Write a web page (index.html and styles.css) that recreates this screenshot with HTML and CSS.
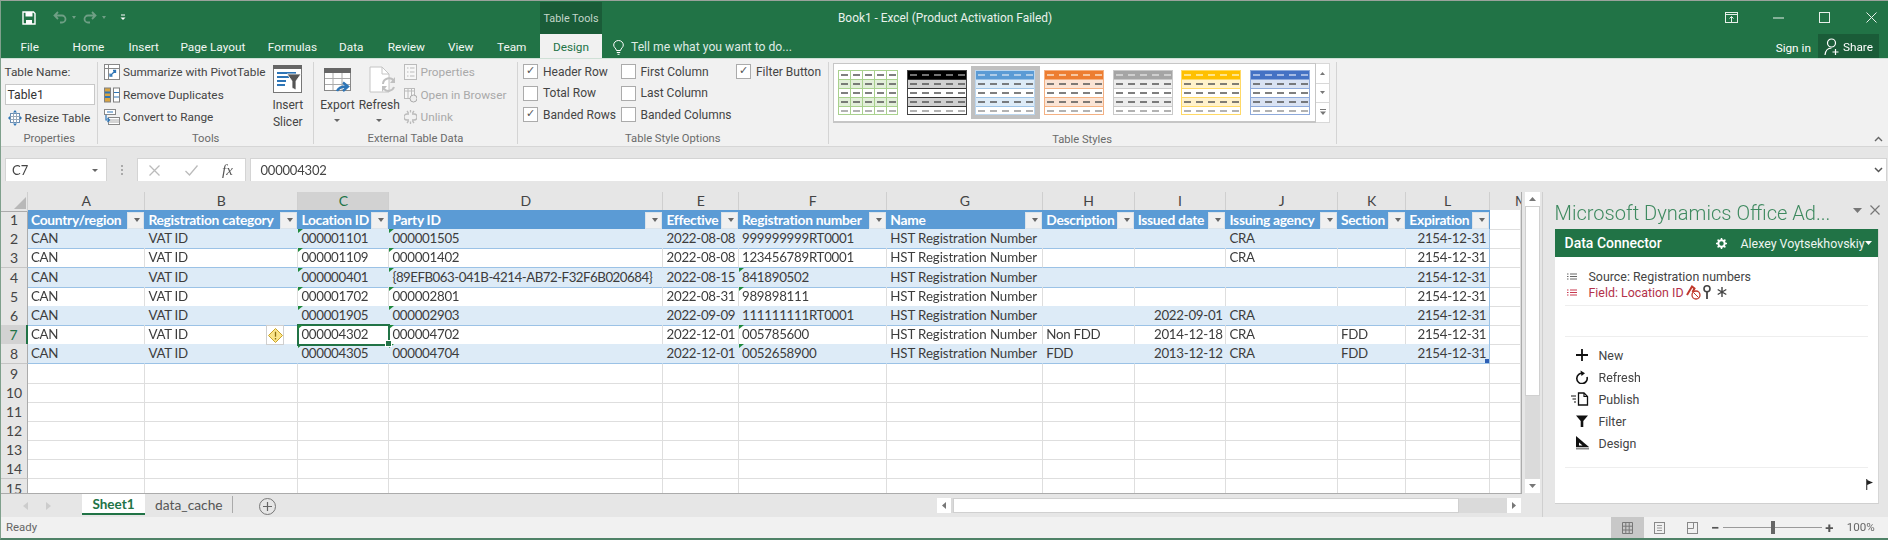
FILE: index.html
```html
<!DOCTYPE html>
<html lang="en">
<head>
<meta charset="utf-8">
<title>Book1 - Excel (Product Activation Failed)</title>
<link rel="stylesheet" href="styles.css">
</head>
<body>
<svg class="defs" width="0" height="0" aria-hidden="true">
  <symbol id="tbl" viewBox="0 0 60 45">
    <rect x="0.5" y="0.5" width="59" height="44" fill="#fff" class="tb-e"/>
    <rect x="1" y="1" width="58" height="8.5" class="tb-h"/>
    <rect x="1" y="9.5" width="58" height="9" class="tb-b"/>
    <rect x="1" y="27.5" width="58" height="9" class="tb-b"/>
    <path d="M1 9.5H59M1 18.5H59M1 27.5H59M1 36.5H59" class="tb-l" fill="none"/>
    <path d="M3 5H10M15 5H22M27 5H34M39 5H46M51 5H58" class="tb-hd" fill="none" stroke-width="1.4"/>
    <path d="M3 14H10M15 14H22M27 14H34M39 14H46M51 14H58M3 23H10M15 23H22M27 23H34M39 23H46M51 23H58M3 32H10M15 32H22M27 32H34M39 32H46M51 32H58" stroke="#555" fill="none" stroke-width="1.4"/>
    <path d="M3 41H10M15 41H22M27 41H34M39 41H46M51 41H58" stroke="#999" fill="none" stroke-width="1.4"/>
    <path d="M12.5 1V44M24.5 1V44M36.5 1V44M48.5 1V44" class="tb-v" fill="none"/>
    <rect x="0.5" y="0.5" width="59" height="44" fill="none" class="tb-e"/>
  </symbol>
</svg>
<div class="app">
  <header class="titlebar">
    <div class="qat">
      <svg class="q-save" width="14" height="14" viewBox="0 0 14 14"><path d="M1 1H11.5L13 2.5V13H1Z" fill="none" stroke="#fff" stroke-width="1.4"/><rect x="3.5" y="1" width="7" height="4.5" fill="#fff"/><rect x="4" y="9" width="6" height="4" fill="#fff"/></svg>
      <svg class="q-undo" width="14" height="13" viewBox="0 0 14 13"><path d="M5 1 1.5 4.5 5 8M2 4.5H9A3.5 3.5 0 0 1 9 11.5H7" fill="none" stroke="#6f9f85" stroke-width="1.8"/></svg>
      <span class="q-caret"></span>
      <svg class="q-redo" width="14" height="13" viewBox="0 0 14 13"><path d="M9 1 12.5 4.5 9 8M12 4.5H5A3.5 3.5 0 0 0 5 11.5H7" fill="none" stroke="#6f9f85" stroke-width="1.8"/></svg>
      <span class="q-caret"></span>
      <svg class="q-more" width="6" height="7" viewBox="0 0 6 7"><path d="M1 1H5" stroke="#fff"/><path d="M0.5 3.5H5.5L3 6Z" fill="#fff"/></svg>
    </div>
    <div class="tools-tab">Table Tools</div>
    <div class="doc-title">Book1 - Excel (Product Activation Failed)</div>
    <div class="winctl">
      <svg class="w-disp" width="13" height="11" viewBox="0 0 13 11"><rect x="0.5" y="0.5" width="12" height="10" fill="none" stroke="#e8f0ea"/><path d="M1 2.5H12M6.5 10V4.5M4.5 6.5 6.5 4.5 8.5 6.5" fill="none" stroke="#e8f0ea"/></svg>
      <svg class="w-min" width="11" height="2" viewBox="0 0 11 2"><path d="M0 1H11" stroke="#e8f0ea"/></svg>
      <svg class="w-max" width="11" height="11" viewBox="0 0 11 11"><rect x="0.5" y="0.5" width="10" height="10" fill="none" stroke="#e8f0ea"/></svg>
      <svg class="w-close" width="11" height="11" viewBox="0 0 11 11"><path d="M0.5 0.5 10.5 10.5M10.5 0.5 0.5 10.5" stroke="#e8f0ea"/></svg>
    </div>
  </header>

  <nav class="tabs">
    <span class="tab">File</span>
    <span class="tab">Home</span>
    <span class="tab">Insert</span>
    <span class="tab">Page Layout</span>
    <span class="tab">Formulas</span>
    <span class="tab">Data</span>
    <span class="tab">Review</span>
    <span class="tab">View</span>
    <span class="tab">Team</span>
    <span class="tab tab-on">Design</span>
    <span class="tell">
      <svg width="11" height="15" viewBox="0 0 11 15"><path d="M3.5 10.5C3 8 .7 7.500 .7 5A4.800 4.500 0 0 1 10.300 5C10.300 7.500 8 8 7.500 10.500ZM3.800 12.500H7.200M4.500 14.300H6.500" fill="none" stroke="#fff"/></svg>
      Tell me what you want to do...
    </span>
    <span class="signin">Sign in</span>
    <span class="share">
      <svg width="16" height="18" viewBox="0 0 16 18"><circle cx="7.500" cy="5" r="4" fill="none" stroke="#fff" stroke-width="1.200"/><path d="M1 17C1.500 12.500 4 10 7.500 10M11.500 11V17M8.500 14H14.500" fill="none" stroke="#fff" stroke-width="1.200"/></svg>
      Share
    </span>
  </nav>

  <section class="ribbon">
    <div class="grp g-prop">
      <div class="grp-body prop-body">
        <div class="rrow">Table Name:</div>
        <div class="name-input">Table1</div>
        <div class="rrow">
          <svg class="ric" width="14" height="16" viewBox="0 0 14 16"><rect x="2.500" y="3.500" width="9" height="9" fill="#fff" stroke="#6a8fb5"/><path d="M2.500 6.500H11.500M2.500 9.500H11.500M5.500 3.500V12.500M8.500 3.500V12.500" stroke="#9ab"/><path d="M7 0 9 2.500H5ZM7 16 5 13.500H9ZM0 8 2 6V10ZM14 8 12 10V6Z" fill="#2e75b6"/></svg>
          Resize Table
        </div>
      </div>
      <div class="grp-label">Properties</div>
    </div>

    <div class="grp g-tools">
      <div class="grp-body tools-body">
        <div class="rlist">
          <div class="rrow"><svg class="ric" width="16" height="16" viewBox="0 0 16 16"><rect x="0.500" y="0.500" width="15" height="15" fill="#fff" stroke="#888"/><path d="M0.500 4.500H15.500M4.500 0.500V15.500" stroke="#888"/><path d="M7 11 11 7M9 6.500H11.500V9M6 9.500V12H8.500" fill="none" stroke="#2e75b6" stroke-width="1.300"/></svg>Summarize with PivotTable</div>
          <div class="rrow"><svg class="ric" width="16" height="16" viewBox="0 0 16 16"><rect x="0.500" y="1" width="6" height="14" fill="#d9a441" stroke="#7f7f7f"/><rect x="9.500" y="1" width="6" height="14" fill="#fff" stroke="#7f7f7f"/><path d="M1 5.500H6M1 10H6" stroke="#2e75b6" stroke-width="2"/><path d="M10 5.500H15M10 10H15" stroke="#2e75b6"/></svg>Remove Duplicates</div>
          <div class="rrow"><svg class="ric" width="16" height="16" viewBox="0 0 16 16"><rect x="0.500" y="0.500" width="11" height="5" fill="#fff" stroke="#888"/><path d="M3 3H9" stroke="#2e75b6"/><rect x="4.500" y="8.500" width="11" height="7" fill="#fff" stroke="#888"/><path d="M4.500 11H15.500M4.500 13H15.500" stroke="#aaa"/><path d="M2 6V11H5M3.500 9 5.500 11 3.500 13" fill="none" stroke="#2e75b6" stroke-width="1.200"/></svg>Convert to Range</div>
        </div>
        <div class="bigbtn slicer">
          <svg width="29" height="28" viewBox="0 0 29 28"><rect x="0.500" y="0.500" width="28" height="27" fill="#fff" stroke="#777"/><rect x="0" y="0" width="29" height="4" fill="#666"/><path d="M4 8H23M4 12H16M4 16H13M4 20H12" stroke="#2e75b6" stroke-width="2"/><path d="M14 9H28L23 16V25L19 23V16Z" fill="#555" stroke="#fff" stroke-width=".8"/></svg>
          <span>Insert<br>Slicer</span>
        </div>
      </div>
      <div class="grp-label">Tools</div>
    </div>

    <div class="grp g-ext">
      <div class="grp-body ext-body">
        <div class="bigbtn export">
          <svg width="27" height="29" viewBox="0 0 27 29"><rect x="0.500" y="2.500" width="26" height="22" fill="#fff" stroke="#888"/><rect x="0" y="2" width="27" height="5" fill="#666"/><path d="M1 12.500H26M1 18.500H26M9 7V24M18 7V24" stroke="#aaa"/><path d="M13 25C15 21 18 20.500 22 20.500M19 16.500 24 20.500 19 25" fill="none" stroke="#2e75b6" stroke-width="2.400"/></svg>
          <span>Export</span><i class="drop"></i>
        </div>
        <div class="bigbtn refresh">
          <svg width="27" height="29" viewBox="0 0 27 29"><path d="M1 1H13L20 8V26H1Z" fill="#fff" stroke="#c4c4c4"/><path d="M13 1V8H20" fill="none" stroke="#c4c4c4"/><path d="M14 18A6 6 0 0 1 25 15M25 21A6 6 0 0 1 15 23" fill="none" stroke="#c0c0c0" stroke-width="2"/><path d="M26 11V17H21ZM13 26V20H18Z" fill="#c0c0c0"/></svg>
          <span>Refresh</span><i class="drop"></i>
        </div>
        <div class="rlist off">
          <div class="rrow"><svg class="ric" width="13" height="16" viewBox="0 0 13 16"><rect x="0.500" y="0.500" width="12" height="15" fill="#f7f7f7" stroke="#bbb"/><path d="M3 4H4.500M3 8H4.500M3 12H4.500M6 4H10.500M6 8H10.500M6 12H10.500" stroke="#bbb"/></svg>Properties</div>
          <div class="rrow"><svg class="ric" width="13" height="16" viewBox="0 0 13 16"><rect x="0.500" y="1.500" width="10" height="10" fill="#f7f7f7" stroke="#bbb"/><path d="M.5 4H10.500M4 2V11M7.500 2V11" stroke="#bbb"/><circle cx="9.500" cy="11.500" r="3.500" fill="#eee" stroke="#aaa"/></svg>Open in Browser</div>
          <div class="rrow"><svg class="ric" width="13" height="16" viewBox="0 0 13 16"><path d="M5 5H3A3 3 0 0 0 3 11H5M8 5H10A3 3 0 0 1 10 11H8M6.500 1V3.500M3 2 4.500 4M10 2 8.500 4M6.500 12.500V15M3 14 4.500 12M10 14 8.500 12" fill="none" stroke="#bbb" stroke-width="1.300"/></svg>Unlink</div>
        </div>
      </div>
      <div class="grp-label">External Table Data</div>
    </div>

    <div class="grp g-opt">
      <div class="grp-body opt-body">
        <label class="chk on">Header Row</label>
        <label class="chk">First Column</label>
        <label class="chk on">Filter Button</label>
        <label class="chk">Total Row</label>
        <label class="chk">Last Column</label>
        <span></span>
        <label class="chk on">Banded Rows</label>
        <label class="chk">Banded Columns</label>
        <span></span>
      </div>
      <div class="grp-label">Table Style Options</div>
    </div>

    <div class="grp g-sty">
      <div class="grp-body sty-body">
        <div class="gallery">
          <div class="swatch"><svg class="thumb t-green" width="60" height="45"><use href="#tbl"/></svg></div>
          <div class="swatch"><svg class="thumb t-black" width="60" height="45"><use href="#tbl"/></svg></div>
          <div class="swatch swatch-on"><svg class="thumb t-blue" width="60" height="45"><use href="#tbl"/></svg></div>
          <div class="swatch"><svg class="thumb t-orange" width="60" height="45"><use href="#tbl"/></svg></div>
          <div class="swatch"><svg class="thumb t-gray" width="60" height="45"><use href="#tbl"/></svg></div>
          <div class="swatch"><svg class="thumb t-gold" width="60" height="45"><use href="#tbl"/></svg></div>
          <div class="swatch"><svg class="thumb t-navy" width="60" height="45"><use href="#tbl"/></svg></div>
        </div>
        <div class="gal-scroll">
          <span><svg width="5" height="3" viewBox="0 0 5 3"><path d="M2.500 0 5 3H0Z" fill="#777"/></svg></span>
          <span><svg width="5" height="3" viewBox="0 0 5 3"><path d="M0 0H5L2.500 3Z" fill="#777"/></svg></span>
          <span><svg width="6" height="6" viewBox="0 0 6 6"><path d="M0 .5H6" stroke="#777"/><path d="M0 2.500H6L3 6Z" fill="#777"/></svg></span>
        </div>
      </div>
      <div class="grp-label">Table Styles</div>
    </div>
    <svg class="collapse" width="9" height="6" viewBox="0 0 9 6"><path d="M1 5 4.500 1.500 8 5" fill="none" stroke="#666" stroke-width="1.400"/></svg>
  </section>

  <section class="fbar">
    <div class="namebox">C7<i class="drop"></i></div>
    <div class="fdots"></div>
    <div class="fbtns">
      <svg width="11" height="11" viewBox="0 0 11 11"><path d="M.5 .5 10.500 10.500M10.500 .5 .5 10.500" stroke="#bbb" stroke-width="1.300"/></svg>
      <svg width="13" height="11" viewBox="0 0 13 11"><path d="M.5 6 4.500 10 12.500 .5" fill="none" stroke="#bbb" stroke-width="1.300"/></svg>
      <span class="fx">fx</span>
    </div>
    <div class="finput">000004302
      <svg width="9" height="6" viewBox="0 0 9 6"><path d="M1 1 4.500 4.500 8 1" fill="none" stroke="#555" stroke-width="1.500"/></svg>
    </div>
  </section>

  <main class="main">
    <div class="workarea">
      <div class="sheet-row">
        <div class="sheet">
          <div class="row colhead"><div class="corner"><i></i></div><div>A</div><div>B</div><div class="col-on">C</div><div>D</div><div>E</div><div>F</div><div>G</div><div>H</div><div>I</div><div>J</div><div>K</div><div>L</div><div class="col-m">M</div></div>
          <div class="row thead"><div class="rh">1</div><div class="c">Country/region</div><div class="c">Registration category</div><div class="c">Location ID</div><div class="c">Party ID</div><div class="c">Effective</div><div class="c">Registration number</div><div class="c">Name</div><div class="c">Description</div><div class="c">Issued date</div><div class="c">Issuing agency</div><div class="c">Section</div><div class="c">Expiration</div><div class="e"></div></div>
          <div class="row band"><div class="rh">2</div><div class="c">CAN</div><div class="c">VAT ID</div><div class="c t">000001101</div><div class="c t">000001505</div><div class="c r">2022-08-08</div><div class="c">999999999RT0001</div><div class="c n">HST Registration Number</div><div class="c"></div><div class="c"></div><div class="c">CRA</div><div class="c"></div><div class="c r">2154-12-31</div><div class="e"></div></div>
          <div class="row"><div class="rh">3</div><div class="c">CAN</div><div class="c">VAT ID</div><div class="c t">000001109</div><div class="c t">000001402</div><div class="c r">2022-08-08</div><div class="c">123456789RT0001</div><div class="c n">HST Registration Number</div><div class="c"></div><div class="c"></div><div class="c">CRA</div><div class="c"></div><div class="c r">2154-12-31</div><div class="e"></div></div>
          <div class="row band"><div class="rh">4</div><div class="c">CAN</div><div class="c">VAT ID</div><div class="c t">000000401</div><div class="c t guid">{89EFB063-041B-4214-AB72-F32F6B020684}</div><div class="c r">2022-08-15</div><div class="c t">841890502</div><div class="c n">HST Registration Number</div><div class="c"></div><div class="c"></div><div class="c"></div><div class="c"></div><div class="c r">2154-12-31</div><div class="e"></div></div>
          <div class="row"><div class="rh">5</div><div class="c">CAN</div><div class="c">VAT ID</div><div class="c t">000001702</div><div class="c t">000002801</div><div class="c r">2022-08-31</div><div class="c t">989898111</div><div class="c n">HST Registration Number</div><div class="c"></div><div class="c"></div><div class="c"></div><div class="c"></div><div class="c r">2154-12-31</div><div class="e"></div></div>
          <div class="row band"><div class="rh">6</div><div class="c">CAN</div><div class="c">VAT ID</div><div class="c t">000001905</div><div class="c t">000002903</div><div class="c r">2022-09-09</div><div class="c">111111111RT0001</div><div class="c n">HST Registration Number</div><div class="c"></div><div class="c r">2022-09-01</div><div class="c">CRA</div><div class="c"></div><div class="c r">2154-12-31</div><div class="e"></div></div>
          <div class="row"><div class="rh rh-on">7</div><div class="c">CAN</div><div class="c tagged">VAT ID<span class="errtag"><svg width="15" height="15" viewBox="0 0 15 15"><path d="M7.500 .5 14.500 7.500 7.500 14.500 .5 7.500Z" fill="#fbe58a" stroke="#c9a227"/><path d="M7.500 3.800V8.800M7.500 10V11.500" stroke="#8a6d10" stroke-width="1.300"/></svg></span></div><div class="c t sel">000004302</div><div class="c t">000004702</div><div class="c r">2022-12-01</div><div class="c t">005785600</div><div class="c n">HST Registration Number</div><div class="c">Non FDD</div><div class="c r">2014-12-18</div><div class="c">CRA</div><div class="c">FDD</div><div class="c r">2154-12-31</div><div class="e"></div></div>
          <div class="row band"><div class="rh">8</div><div class="c">CAN</div><div class="c">VAT ID</div><div class="c t">000004305</div><div class="c t">000004704</div><div class="c r">2022-12-01</div><div class="c t">0052658900</div><div class="c n">HST Registration Number</div><div class="c">FDD</div><div class="c r">2013-12-12</div><div class="c">CRA</div><div class="c">FDD</div><div class="c r last">2154-12-31</div><div class="e"></div></div>
          <div class="row"><div class="rh">9</div><div class="e"></div><div class="e"></div><div class="e"></div><div class="e"></div><div class="e"></div><div class="e"></div><div class="e"></div><div class="e"></div><div class="e"></div><div class="e"></div><div class="e"></div><div class="e"></div><div class="e"></div></div>
          <div class="row"><div class="rh">10</div><div class="e"></div><div class="e"></div><div class="e"></div><div class="e"></div><div class="e"></div><div class="e"></div><div class="e"></div><div class="e"></div><div class="e"></div><div class="e"></div><div class="e"></div><div class="e"></div><div class="e"></div></div>
          <div class="row"><div class="rh">11</div><div class="e"></div><div class="e"></div><div class="e"></div><div class="e"></div><div class="e"></div><div class="e"></div><div class="e"></div><div class="e"></div><div class="e"></div><div class="e"></div><div class="e"></div><div class="e"></div><div class="e"></div></div>
          <div class="row"><div class="rh">12</div><div class="e"></div><div class="e"></div><div class="e"></div><div class="e"></div><div class="e"></div><div class="e"></div><div class="e"></div><div class="e"></div><div class="e"></div><div class="e"></div><div class="e"></div><div class="e"></div><div class="e"></div></div>
          <div class="row"><div class="rh">13</div><div class="e"></div><div class="e"></div><div class="e"></div><div class="e"></div><div class="e"></div><div class="e"></div><div class="e"></div><div class="e"></div><div class="e"></div><div class="e"></div><div class="e"></div><div class="e"></div><div class="e"></div></div>
          <div class="row"><div class="rh">14</div><div class="e"></div><div class="e"></div><div class="e"></div><div class="e"></div><div class="e"></div><div class="e"></div><div class="e"></div><div class="e"></div><div class="e"></div><div class="e"></div><div class="e"></div><div class="e"></div><div class="e"></div></div>
          <div class="row"><div class="rh">15</div><div class="e"></div><div class="e"></div><div class="e"></div><div class="e"></div><div class="e"></div><div class="e"></div><div class="e"></div><div class="e"></div><div class="e"></div><div class="e"></div><div class="e"></div><div class="e"></div><div class="e"></div></div>
        </div>
        <div class="vscroll">
          <span class="sb-btn"><svg width="7" height="4" viewBox="0 0 7 4"><path d="M3.500 0 7 4H0Z" fill="#777"/></svg></span>
          <span class="sb-thumb"></span>
          <span class="sb-track"></span>
          <span class="sb-btn"><svg width="7" height="4" viewBox="0 0 7 4"><path d="M0 0H7L3.500 4Z" fill="#777"/></svg></span>
        </div>
      </div>
      <div class="tabbar">
        <svg class="nav-l" width="5" height="8" viewBox="0 0 5 8"><path d="M5 0V8L0 4Z" fill="#ccc"/></svg>
        <svg class="nav-r" width="5" height="8" viewBox="0 0 5 8"><path d="M0 0V8L5 4Z" fill="#ccc"/></svg>
        <span class="stab stab-on">Sheet1</span>
        <span class="stab">data_cache</span>
        <svg class="addsheet" width="17" height="17" viewBox="0 0 17 17"><circle cx="8.500" cy="8.500" r="8" fill="none" stroke="#777"/><path d="M8.500 4V13M4 8.500H13" stroke="#666" stroke-width="1.200"/></svg>
        <div class="hscroll">
          <span class="hs-btn"><svg width="4" height="7" viewBox="0 0 4 7"><path d="M4 0V7L0 3.500Z" fill="#777"/></svg></span>
          <span class="hs-thumb"></span>
          <span class="hs-track"></span>
          <span class="hs-btn"><svg width="4" height="7" viewBox="0 0 4 7"><path d="M0 0V7L4 3.500Z" fill="#777"/></svg></span>
        </div>
      </div>
    </div>

    <aside class="pane">
      <div class="pane-title">
        <span>Microsoft Dynamics Office Ad...</span>
        <svg class="pt-caret" width="9" height="5" viewBox="0 0 9 5"><path d="M0 0H9L4.500 5Z" fill="#777"/></svg>
        <svg class="pt-close" width="10" height="10" viewBox="0 0 10 10"><path d="M.5 .5 9.500 9.500M9.500 .5 .5 9.500" stroke="#777" stroke-width="1.200"/></svg>
      </div>
      <div class="panel">
        <div class="p-head">
          <strong>Data Connector</strong>
          <svg class="gear" width="11" height="11" viewBox="0 0 11 11"><circle cx="5.500" cy="5.500" r="3.200" fill="none" stroke="#fff" stroke-width="2"/><path d="M5.500 0V2M5.500 9V11M0 5.500H2M9 5.500H11M1.600 1.600 3 3M8 8 9.400 9.400M9.400 1.600 8 3M3 8 1.600 9.400" stroke="#fff" stroke-width="1.500"/></svg>
          <span class="p-user">Alexey Voytsekhovskiy</span>
          <svg class="p-caret" width="7" height="4" viewBox="0 0 7 4"><path d="M0 0H7L3.500 4Z" fill="#fff"/></svg>
        </div>
        <div class="p-info">
          <div class="p-line"><svg width="10" height="7" viewBox="0 0 10 7"><path d="M0 1H1.500M3 1H10M0 3.500H1.500M3 3.500H10M0 6H1.500M3 6H10" stroke="#666"/></svg>Source: Registration numbers</div>
          <div class="p-line p-red"><svg width="10" height="7" viewBox="0 0 10 7"><path d="M0 1H1.500M3 1H10M0 3.500H1.500M3 3.500H10M0 6H1.500M3 6H10" stroke="#c8384f"/></svg>Field: Location ID
            <svg class="fi" width="15" height="16" viewBox="0 0 15 16"><path d="M1 11 6 2.500 8.500 4.500 6.500 8" fill="none" stroke="#c0392b" stroke-width="2"/><circle cx="10" cy="11" r="4" fill="#fff" stroke="#c0392b" stroke-width="1.300"/><path d="M7.500 8.500 12.500 13.500" stroke="#c0392b"/></svg>
            <svg class="fi" width="8" height="15" viewBox="0 0 8 15"><circle cx="4" cy="3.800" r="3" fill="none" stroke="#444" stroke-width="1.600"/><path d="M4 7V14" stroke="#444" stroke-width="1.800"/></svg>
            <svg class="fi fi-star" width="10" height="10" viewBox="0 0 10 10"><path d="M5 0V10M.7 2.500 9.300 7.500M9.300 2.500 .7 7.500" stroke="#444" stroke-width="1.400"/></svg>
          </div>
        </div>
        <div class="p-gap"></div>
        <ul class="p-menu">
          <li><svg width="14" height="14" viewBox="0 0 14 14"><path d="M7 1V13M1 7H13" stroke="#111" stroke-width="1.800"/></svg>New</li>
          <li><svg width="14" height="14" viewBox="0 0 14 14"><path d="M8 2.300A5.200 5.200 0 1 0 12 6" fill="none" stroke="#111" stroke-width="1.600" transform="translate(0 1)"/><path d="M5.500 .5 10 3.200 6.500 6Z" fill="#111"/></svg>Refresh</li>
          <li><svg width="18" height="14" viewBox="0 0 18 14"><path d="M7.500 1H13L16.500 4.500V13H7.500Z" fill="none" stroke="#111" stroke-width="1.300"/><path d="M13 1V4.500H16.500M0 4H5M1.500 7H5M3 10H5" fill="none" stroke="#111" stroke-width="1.200"/></svg>Publish</li>
          <li><svg width="14" height="14" viewBox="0 0 14 14"><path d="M1 1.500H13L8.300 7V13H5.700V7Z" fill="#111"/></svg>Filter</li>
          <li><svg width="15" height="14" viewBox="0 0 15 14"><path d="M1 0 14 11H1Z" fill="#111"/><path d="M1 12.500H14" stroke="#888" stroke-width="2"/><path d="M4 6.500 7.500 9.500H4Z" fill="#fff"/></svg>Design</li>
        </ul>
        <div class="p-foot"><svg width="7" height="11" viewBox="0 0 7 11"><path d="M.7 0V11" stroke="#444" stroke-width="1.200"/><path d="M1 1 7 3.500 1 6Z" fill="#222"/></svg></div>
      </div>
    </aside>
  </main>

  <footer class="status">
    <span class="ready">Ready</span>
    <span class="vbtn vbtn-on"><svg width="11" height="12" viewBox="0 0 11 12"><path d="M.5 .5H10.500V11.500H.5ZM.5 4.200H10.500M.5 8H10.500M3.800 .5V11.500M7.200 .5V11.500" fill="none" stroke="#777"/></svg></span>
    <span class="vbtn"><svg width="11" height="12" viewBox="0 0 11 12"><rect x=".5" y=".5" width="10" height="11" fill="none" stroke="#888"/><path d="M3 3.500H8M3 6H8M3 8.500H8" stroke="#999"/></svg></span>
    <span class="vbtn"><svg width="11" height="12" viewBox="0 0 11 12"><rect x=".5" y=".5" width="10" height="11" fill="none" stroke="#888"/><path d="M6.500 .5V6.500H.5" fill="none" stroke="#888"/></svg></span>
    <div class="zoom">
      <span class="zsign">&#8722;</span>
      <span class="zslider"><i></i></span>
      <span class="zsign">+</span>
    </div>
    <span class="zpct">100%</span>
  </footer>
</div>
</body>
</html>
```
FILE: styles.css
```css
* { box-sizing: border-box; }
html, body { margin: 0; padding: 0; }
body { width: 1888px; height: 540px; overflow: hidden; background: #f1f1f1; font-family: Roboto, "Open Sans", sans-serif; font-size: 12px; color: #444; }
.defs { display: block; height: 0; }
.app { width: 1888px; height: 540px; display: flex; flex-direction: column; border-top: 1px solid #9aa29c; border-left: 1px solid #7fa08c; border-bottom: 2px solid #4f8267; filter: blur(.4px); }

/* title */
.titlebar { height: 33px; flex: none; background: #217346; display: flex; align-items: stretch; color: #fff; position: relative; }
.qat { width: 539px; display: flex; align-items: center; padding-left: 21px; }
.q-undo { margin-left: 17px; }
.q-redo { margin-left: 7px; }
.q-caret { width: 0; height: 0; border: 2.5px solid transparent; border-top: 3px solid #6f9f85; border-bottom: 0; margin-left: 5px; }
.q-more { margin-left: 14px; }
.tools-tab { width: 62px; margin-top: 1px; background: #1a5c38; color: #c3d6ca; font-size: 10.8px; display: flex; align-items: center; justify-content: center; white-space: nowrap; }
.doc-title { width: 216px; margin-left: 235px; display: flex; align-items: center; justify-content: center; white-space: nowrap; font-size: 11.9px; color: #e9f1ec; }
.winctl { flex: 1; display: flex; align-items: center; padding-left: 672px; }
.w-min { margin-left: 35px; }
.w-max { margin-left: 35px; }
.w-close { margin-left: 36px; }

/* tabs */
.tabs { height: 25px; flex: none; background: #217346; color: #fff; display: grid; grid-template-columns: 71.6px 56px 51.8px 87.4px 71.2px 48.800px 60.200px 49px 43px 62px 192px 1024px 60.600px 1fr; align-items: stretch; font-size: 11.8px; border-bottom: 1px solid #cfe0d6; }
.tab { padding: 2px 0 0 0; display: flex; align-items: center; white-space: nowrap; color: #f2f7f4; }
.tab:first-child { padding-left: 19.400px; }
.tab-on { background: #f1f1f1; color: #217346; justify-content: center; }
.tell { display: flex; align-items: center; gap: 7px; padding-left: 11px; color: #dfeae4; padding-top: 2px; white-space: nowrap; font-size: 12.200px; }
.signin { grid-column: 12; justify-self: end; align-self: center; margin: 3px 7px 0 0; white-space: nowrap; }
.share { grid-column: 13; background: #1a5c38; display: flex; align-items: center; gap: 3px; padding: 2px 0 0 6px; white-space: nowrap; }

/* ribbon */
.ribbon { height: 88px; flex: none; display: flex; background: #f1f1f1; border-bottom: 1px solid #d6d6d6; padding-top: 3px; position: relative; }
.grp { height: 82px; display: flex; flex-direction: column; border-right: 1px solid #d4d4d4; flex: none; }
.g-prop { width: 97.4px; }
.g-tools { width: 215.6px; }
.g-ext { width: 204px; }
.g-opt { width: 310.6px; }
.g-sty { width: 508px; }
.grp-body { height: 72px; flex: none; }
.grp-label { height: 10px; line-height: 12px; text-align: center; font-size: 11.2px; color: #6a6a6a; white-space: nowrap; }
.rrow { height: 22.4px; display: flex; align-items: center; white-space: nowrap; font-size: 11.8px; color: #444; }
.ric { flex: none; margin-right: 3px; }
.prop-body { padding: 0 0 0 3.500px; margin-top: -1px; }
.name-input { height: 21px; width: 90px; margin: 1px 0 1px; background: #fff; border: 1px solid #c8c8c8; padding-left: 2px; display: flex; align-items: center; font-size: 12.200px; color: #333; }
.prop-body .rrow:last-child .ric { margin: 0 3px 0 3px; }
.tools-body { display: flex; justify-content: space-between; padding: 0 3px 0 5.600px; margin-top: -1px; }
.bigbtn { display: flex; flex-direction: column; align-items: center; font-size: 12px; line-height: 16.7px; text-align: center; color: #444; }
.slicer { width: 46px; padding-top: 4px; }
.slicer span { margin-top: 4px; }
.ext-body { display: flex; margin-top: -1px; padding-left: 3.500px; }
.export { width: 40px; padding-top: 5px; }
.export svg { margin-left: 1px; }
.export span, .refresh span { margin-top: 2px; }
.refresh { width: 43.500px; padding-top: 5px; }
.refresh svg { margin-left: 7px; }
.drop { display: block; width: 0; height: 0; border: 3px solid transparent; border-top: 3px solid #666; border-bottom: 0; margin-top: 5px; }
.off { margin-left: 3.500px; }
.off .rrow { color: #a9a9a9; }
.opt-body { display: grid; grid-template-columns: 97.500px 115.500px auto; grid-auto-rows: 21.500px; padding-left: 5.500px; margin-top: -1px; justify-content: start; }
.chk { display: flex; align-items: center; white-space: nowrap; font-size: 12px; gap: 4.500px; }
.chk::before { content: ""; width: 13px; height: 13px; flex: none; background: #fff; border: 1px solid #ababab; font-size: 11px; line-height: 11px; text-align: center; color: #555; }
.chk.on::before { content: "\2713"; }
.sty-body { display: flex; padding: 1px 0 0 4px; }
.gallery { width: 483.600px; height: 59.500px; display: flex; background: #fff; border: 1px solid #c6c6c6; border-bottom-width: 2px; }
.swatch { width: 68.700px; flex: none; display: flex; align-items: center; justify-content: center; }
.swatch-on { background: #c0c0c0; height: 53px; margin-top: 2px; }
.gal-scroll { width: 14px; height: 59.500px; display: flex; flex-direction: column; }
.gal-scroll span { flex: 1; display: flex; align-items: center; justify-content: center; background: #fff; border: 1px solid #d8d8d8; border-left: 0; }
.gal-scroll span + span { border-top: 0; }
.collapse { position: absolute; right: 5px; top: 77px; }

.thumb { display: block; }
.tb-e { stroke: var(--e); }
.tb-h { fill: var(--h); }
.tb-b { fill: var(--b); }
.tb-l { stroke: var(--l); }
.tb-hd { stroke: var(--hd); }
.tb-v { stroke: var(--v, none); }
.t-green { --e: #a9d18e; --h: #fff; --b: #e2efd9; --l: #a9d18e; --hd: #555; --v: #a9d18e; }
.t-black { --e: #444; --h: #000; --b: #d0d0d0; --l: #333; --hd: #999; }
.t-blue { --e: #bcd6ee; --h: #5b9bd5; --b: #ddebf7; --l: #9dc3e6; --hd: #cde; }
.t-orange { --e: #f4b183; --h: #ed7d31; --b: #fbe4d5; --l: #f4b183; --hd: #fadfc8; }
.t-gray { --e: #c9c9c9; --h: #a5a5a5; --b: #ededed; --l: #c9c9c9; --hd: #ddd; }
.t-gold { --e: #ffd966; --h: #ffc000; --b: #fff2cc; --l: #ffd966; --hd: #fff0b8; }
.t-navy { --e: #8eaadb; --h: #4472c4; --b: #d9e2f3; --l: #8eaadb; --hd: #c5d3ee; }

/* formula bar */
.fbar { height: 45px; flex: none; background: #e6e6e6; display: flex; align-items: flex-start; padding: 11px 1.500px 0 4px; }
.namebox { width: 102px; height: 23px; background: #fff; border: 1px solid #d4d4d4; border-bottom: 0; display: flex; align-items: center; justify-content: space-between; padding: 0 8px 0 6px; font-family: Lato, sans-serif; font-size: 13px; color: #444; }
.namebox .drop { margin: 0; }
.fdots { width: 2px; height: 10px; margin: 7px 14.500px 0 13.500px; background: repeating-linear-gradient(#aaa 0 2px, transparent 2px 4px); }
.fbtns { width: 109px; height: 23px; background: #fff; border: 1px solid #d4d4d4; border-bottom: 0; display: flex; align-items: center; padding-left: 11px; gap: 25px; }
.fx { font-family: "Liberation Serif", serif; font-style: italic; font-size: 15px; color: #555; margin-left: -1px; }
.finput { flex: 1; height: 23px; margin-left: 3.500px; background: #fff; border: 1px solid #d4d4d4; border-bottom: 0; display: flex; align-items: center; justify-content: space-between; padding: 0 3px 0 10px; font-family: Lato, sans-serif; font-size: 13px; color: #444; letter-spacing: -.2px; }

/* main */
.main { height: 325px; flex: none; display: flex; background: #e6e6e6; }
.workarea { width: 1542px; flex: none; display: flex; flex-direction: column; border-right: 1px solid #cfcfcf; }
.sheet-row { height: 302px; flex: none; display: flex; }
.sheet { width: 1520.500px; height: 302px; overflow: hidden; background: #fff; border-bottom: 1px solid #ababab; border-right: 1px solid #ababab; flex: none; font-family: Lato, sans-serif; font-size: 13.300px; color: #3c3c3c; letter-spacing: -.28px; }
.row { display: grid; grid-template-columns: 27px 117.400px 153px 91px 274px 75.600px 148.300px 156px 91.400px 91.800px 111.500px 68.400px 83.600px 31.500px; height: 19.200px; }
.colhead { height: 18px; background: #e6e6e6; text-align: center; line-height: 18px; font-size: 14px; color: #444; letter-spacing: 0; }
.colhead > div { border-right: 1px solid #cfcfcf; border-bottom: 1px solid #ababab; }
.colhead > .col-on { background: #d2d2d2; color: #217346; border-bottom: 2px solid #217346; }
.colhead > .col-m { text-align: left; padding-left: 25px; overflow: hidden; border-right: 0; }
.corner { position: relative; }
.corner i { position: absolute; right: 1px; bottom: 2px; width: 0; height: 0; border-style: solid; border-width: 0 0 12px 12px; border-color: transparent transparent #b8b8b8 transparent; }
.rh { background: #e6e6e6; border-right: 1px solid #ababab; border-bottom: 1px solid #c6c6c6; text-align: center; line-height: 19px; font-size: 14px; color: #444; letter-spacing: 0; }
.rh-on { background: #d2d2d2; color: #217346; border-right: 2px solid #217346; }
.c, .e { border-right: 1px solid #dedede; border-bottom: 1px solid #dedede; padding: 0 3px; line-height: 18.500px; white-space: nowrap; position: relative; }
.c { border-bottom-color: #9bc2e6; overflow: visible; }
.n { letter-spacing: -.1px; }
.guid { letter-spacing: -.5px; }
.row .c:nth-child(13) { border-right-color: #9bc2e6; }
.band .c { background: #ddebf7; border-right-color: #ddebf7; }
.r { text-align: right; padding-right: 2.700px; }
.t::before { content: ""; position: absolute; left: 0; top: 0; border-style: solid; border-width: 4px 5px 0 0; border-color: #1e8a3c transparent transparent transparent; }
.thead .c { background: #5b9bd5; color: #fff; font-weight: 700; font-size: 13.800px; border: 0; line-height: 19px; }
.thead .c::after { content: ""; position: absolute; right: 1px; top: 2px; width: 15px; height: 15px; background: #f0f0f0; border: 1px solid #dbe3ea; }
.thead .c::before { content: ""; position: absolute; right: 5px; top: 8px; z-index: 1; border-style: solid; border-width: 4px 3.500px 0; border-color: #666 transparent transparent; }
.thead .e { background: #fff; }
.sel { outline: 2px solid #217346; outline-offset: -1px; z-index: 2; overflow: visible; }
.sel::after { content: ""; position: absolute; right: -4px; bottom: -3px; width: 5px; height: 5px; background: #217346; border: 1px solid #fff; }
.errtag { position: absolute; right: 13px; top: 0; width: 18px; height: 20px; background: #fff; border: 1px solid #cfcfcf; display: flex; align-items: center; justify-content: center; z-index: 3; }
.last::after { content: ""; position: absolute; right: 0; bottom: 0; width: 4px; height: 4px; background: #2e5fb5; }

.vscroll { width: 15px; margin-left: 3px; height: 301px; display: flex; flex-direction: column; background: #dadada; }
.sb-btn { height: 14px; flex: none; background: #fff; display: flex; align-items: center; justify-content: center; }
.sb-thumb { height: 190px; flex: none; background: #fff; border: 1px solid #d0d0d0; }
.sb-track { flex: 1; }

.tabbar { height: 23px; flex: none; display: flex; position: relative; background: #e6e6e6; }
.nav-l { margin: 8px 0 0 22px; }
.nav-r { margin: 8px 0 0 18px; }
.stab { width: 77px; height: 21px; display: flex; align-items: center; padding-left: 11px; font-family: Lato, sans-serif; font-size: 13.800px; color: #555; white-space: nowrap; }
.stab-on { width: 63px; margin-left: 31px; background: #fff; color: #217346; font-weight: 700; justify-content: center; padding: 0; border-bottom: 2px solid #217346; font-size: 13.500px; }
.stab:not(.stab-on) { border-right: 1px solid #aaa; height: 17px; margin-top: 2px; padding-left: 10px; width: 88px; }
.addsheet { margin: 4px 0 0 26px; }
.hscroll { position: absolute; left: 936px; width: 584px; top: 4px; height: 15px; display: flex; background: #dadada; }
.hs-btn { width: 14px; flex: none; background: #fff; display: flex; align-items: center; justify-content: center; }
.hs-thumb { width: 506px; flex: none; margin-left: 2px; background: #fff; border: 1px solid #d0d0d0; }
.hs-track { flex: 1; }

/* task pane */
.pane { flex: 1; display: flex; flex-direction: column; padding-left: 11.500px; padding-right: 9px; }
.pane-title { height: 37px; flex: none; display: flex; align-items: flex-end; position: relative; font-size: 20.100px; font-weight: 300; color: #3f8a60; white-space: nowrap; padding-bottom: 3px; line-height: 26px; }
.pt-caret { position: absolute; right: 17px; top: 16px; }
.pt-close { position: absolute; right: -1px; top: 13px; }
.panel { height: 275px; flex: none; background: #fff; border-bottom: 1px solid #d0d0d0; border-right: 1px solid #d6d6d6; display: flex; flex-direction: column; font-size: 12.400px; color: #444; }
.p-head { height: 28px; flex: none; background: #217346; color: #fff; display: flex; align-items: center; padding-left: 10px; }
.p-head strong { font-weight: 500; font-size: 14px; width: 146px; }
.gear { margin-left: 5px; }
.p-user { margin-left: 14px; width: 119px; color: #eef5f0; white-space: nowrap; }
.p-caret { margin-left: 5px; }
.p-info { height: 49px; flex: none; margin: 0 10px; padding-top: 11px; border-bottom: 1px solid #eee; }
.p-line { height: 16px; display: flex; align-items: center; white-space: nowrap; padding-left: 2px; }
.p-line > svg:first-child { margin-right: 12px; }
.p-red { color: #b3324a; }
.fi { margin-left: 2px; }
.fi-star { margin-left: 6px; }
.p-gap { height: 31px; flex: none; margin: 0 10px; border-bottom: 1px solid #eee; }
.p-menu { list-style: none; margin: 0; padding: 7px 0 0; height: 131px; flex: none; margin-left: 10px; margin-right: 10px; border-bottom: 1px solid #eee; }
.p-menu li { height: 22px; display: flex; align-items: center; position: relative; padding-left: 34px; }
.p-menu li svg { position: absolute; left: 10px; top: 4px; }
.p-menu li:nth-child(3) svg { left: 6px; }
.p-foot { flex: 1; display: flex; justify-content: flex-end; padding: 11px 5px 0 0; }

/* status */
.status { flex: 1; background: #f1f1f1; display: flex; align-items: stretch; }
.ready { width: 1610px; padding-left: 5px; line-height: 21px; font-size: 11.400px; color: #666; }
.vbtn { width: 32.600px; display: flex; align-items: center; justify-content: center; }
.vbtn-on { background: #c8c8c8; }
.zoom { display: flex; align-items: center; margin-left: 0; }
.zsign { font-size: 15px; font-weight: 700; color: #555; width: 13px; text-align: center; }
.zslider { flex: none; width: 99px; height: 1px; background: #9a9a9a; margin: 0 1px; position: relative; }
.zslider i { position: absolute; left: 48px; top: -6px; width: 4px; height: 13px; background: #666; }
.zpct { margin-left: 11px; line-height: 21px; font-size: 11.600px; color: #666; }
```
